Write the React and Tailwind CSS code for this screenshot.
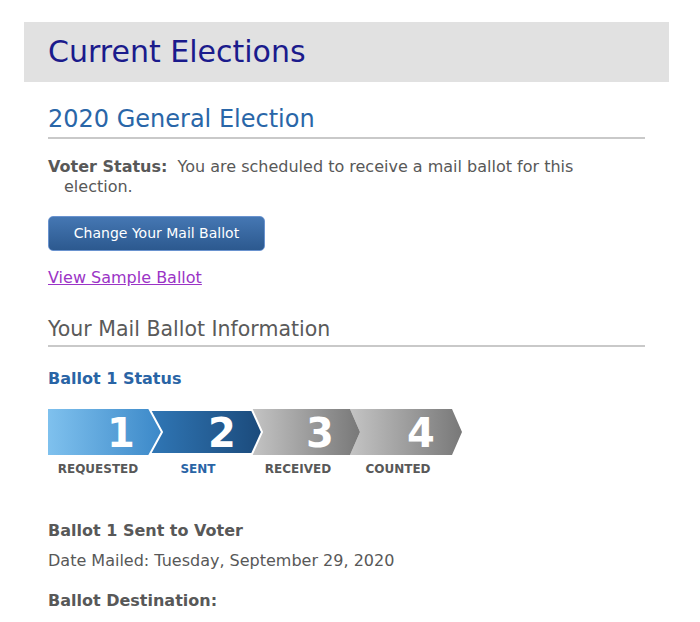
import React from 'react'

const font = { fontFamily: '"DejaVu Sans", Verdana, sans-serif' }

const steps = [
  { n: '1', left: 'left-[73px]' },
  { n: '2', left: 'left-[174px]' },
  { n: '3', left: 'left-[272px]' },
  { n: '4', left: 'left-[373px]' },
]

function StatusChevrons() {
  return (
    <div className="relative mt-5 h-[46px] w-[418px]">
      <svg width="418" height="46" viewBox="0 0 418 46" className="absolute inset-0 block">
        <defs>
          <linearGradient id="g1" x1="0" x2="1" y1="0" y2="0">
            <stop offset="0" stopColor="#7fc1ee" />
            <stop offset="1" stopColor="#3b88c8" />
          </linearGradient>
          <linearGradient id="g2" x1="0" x2="1" y1="0" y2="0">
            <stop offset="0" stopColor="#3077b6" />
            <stop offset="1" stopColor="#1b4a7b" />
          </linearGradient>
          <linearGradient id="g3" x1="0" x2="1" y1="0" y2="0">
            <stop offset="0" stopColor="#c4c4c4" />
            <stop offset="1" stopColor="#787878" />
          </linearGradient>
        </defs>
        <polygon points="0,0 102,0 114,23 102,46 0,46" fill="url(#g1)" />
        <polygon points="302,0 404,0 414,23 404,46 302,46 312,23" fill="url(#g3)" />
        <polygon points="204,0 302,0 312,23 302,46 204,46 214,23" fill="url(#g3)" />
        <polygon
          points="102,1 204,1 214,23 204,45 102,45 114,23"
          fill="url(#g2)"
          stroke="#ffffff"
          strokeWidth="2"
        />
      </svg>
      {steps.map((s) => (
        <span
          key={s.n}
          className={`absolute top-0 ${s.left} -translate-x-1/2 text-[40px] font-bold leading-[48px] text-white`}
        >
          {s.n}
        </span>
      ))}
    </div>
  )
}

export default function App() {
  return (
    <div className="min-h-[622px] bg-white pt-[22px] text-[#585858]" style={font}>
      <div className="mx-6 w-[645px]">
        <div className="flex h-[60px] items-center bg-[#e1e1e1] pl-6">
          <h1 className="text-[30px] leading-none text-[#1b1b8c]">Current Elections</h1>
        </div>

        <div className="px-6">
          <h2 className="mt-[23px] border-b-2 border-[#c9c9c9] pb-1 text-[24px] leading-[28px] text-[#2966a8]">
            2020 General Election
          </h2>

          <p className="mt-[18px] pl-4 -indent-4 text-[16px] leading-5">
            <span className="font-bold">Voter Status:</span>&nbsp; You are scheduled to receive a mail ballot for this
            <br />
            election.
          </p>

          <button className="mt-[19px] flex h-[35px] w-[217px] items-center justify-center rounded-[5px] border border-[#6a93cf] bg-gradient-to-b from-[#4577b3] to-[#2c598f] text-[14px] text-white">
            Change Your Mail Ballot
          </button>

          <a href="#" className="mt-[17px] block w-fit text-[16px] leading-5 text-[#9b34c6] underline">
            View Sample Ballot
          </a>

          <h3 className="mt-[28px] border-b-2 border-[#c9c9c9] pb-[3px] text-[20.5px] leading-[26px] text-[#5a5a5a]">
            Your Mail Ballot Information
          </h3>

          <p className="mt-[22px] text-[16px] font-bold leading-5 text-[#2964a5]">Ballot 1 Status</p>

          <StatusChevrons />

          <div className="mt-1.5 grid w-[400px] grid-cols-4 text-center text-[12px] font-bold leading-4">
            <span>REQUESTED</span>
            <span className="text-[#2964a5]">SENT</span>
            <span>RECEIVED</span>
            <span>COUNTED</span>
          </div>

          <p className="mt-11 text-[16px] font-bold leading-5">Ballot 1 Sent to Voter</p>
          <p className="mt-2.5 text-[16px] leading-5">Date Mailed: Tuesday, September 29, 2020</p>
          <p className="mt-5 text-[16px] font-bold leading-5">Ballot Destination:</p>
        </div>
      </div>
    </div>
  )
}
